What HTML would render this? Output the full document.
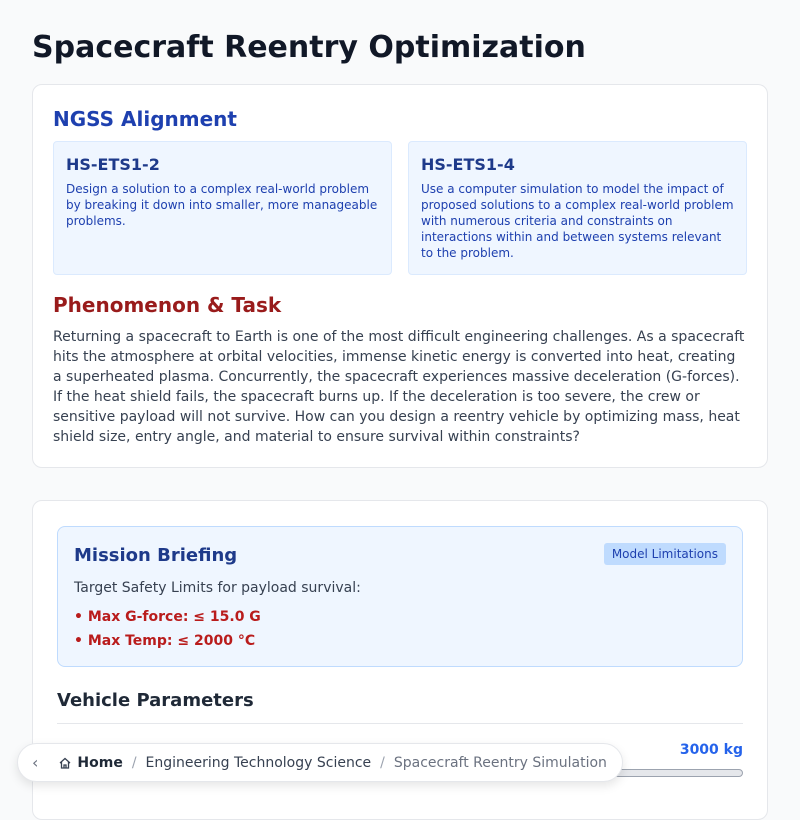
<!DOCTYPE html>
<html><head><style>
*{box-sizing:border-box;margin:0;padding:0}
body{width:800px;height:800px;overflow:hidden;background:#f9fafb;font-family:"DejaVu Sans","Liberation Sans",sans-serif;position:relative}
h1{position:absolute;left:32px;top:30px;font-size:30px;font-weight:bold;color:#111827}
.card{position:absolute;left:32px;width:736px;background:#fff;border:1px solid #e5e7eb;border-radius:10px}
.c1{top:84px;height:384px}
.c2{top:500px;height:320px}
.h2{position:absolute;font-size:20px;font-weight:bold}
.box{position:absolute;top:56px;width:339px;height:134px;background:#eff6ff;border:1px solid #dbeafe;border-radius:4px;padding:13px 12px}
.box b{display:block;font-size:16px;color:#1e3a8a;margin-bottom:7px}
.box p{font-size:12px;line-height:16px;color:#1e40af}
.para{position:absolute;left:20px;top:242px;width:694px;font-size:14px;line-height:20px;color:#374151}
.mb{position:absolute;left:24px;top:25px;width:686px;height:141px;background:#eff6ff;border:1px solid #bfdbfe;border-radius:8px}
</style></head><body>
<h1>Spacecraft Reentry Optimization</h1>
<div class="card c1">
<div class="h2" style="left:20px;top:22px;color:#1e40af">NGSS Alignment</div>
<div class="box" style="left:20px"><b>HS-ETS1-2</b><p>Design a solution to a complex real-world problem by breaking it down into smaller, more manageable problems.</p></div>
<div class="box" style="left:375px"><b>HS-ETS1-4</b><p>Use a computer simulation to model the impact of proposed solutions to a complex real-world problem with numerous criteria and constraints on interactions within and between systems relevant to the problem.</p></div>
<div class="h2" style="left:20px;top:208px;color:#991b1b">Phenomenon &amp; Task</div>
<div class="para">Returning a spacecraft to Earth is one of the most difficult engineering challenges. As a spacecraft hits the atmosphere at orbital velocities, immense kinetic energy is converted into heat, creating a superheated plasma. Concurrently, the spacecraft experiences massive deceleration (G-forces). If the heat shield fails, the spacecraft burns up. If the deceleration is too severe, the crew or sensitive payload will not survive. How can you design a reentry vehicle by optimizing mass, heat shield size, entry angle, and material to ensure survival within constraints?</div>
</div>
<div class="card c2">
<div class="mb">
<div style="position:absolute;left:16px;top:18px;font-size:18px;font-weight:bold;color:#1e3a8a">Mission Briefing</div>
<div style="position:absolute;right:16px;top:16px;background:#bfdbfe;color:#1e40af;font-size:12px;padding:4px 8px;border-radius:3px">Model Limitations</div>
<div style="position:absolute;left:16px;top:53px;font-size:14px;color:#374151">Target Safety Limits for payload survival:</div>
<div style="position:absolute;left:16px;top:78px;font-size:14px;font-weight:bold;color:#b91c1c;line-height:24px">• Max G-force: ≤ 15.0 G<br>• Max Temp: ≤ 2000 °C</div>
</div>
<div style="position:absolute;left:24px;top:189px;font-size:18px;font-weight:bold;color:#1f2937">Vehicle Parameters</div>
<div style="position:absolute;left:24px;top:222px;width:686px;height:1px;background:#e5e7eb"></div>
<div style="position:absolute;right:24px;top:241px;font-size:14px;font-weight:bold;color:#2563eb">3000 kg</div>
<div style="position:absolute;left:24px;top:268px;width:686px;height:8px;background:#e5e7eb;border:1px solid #9ca3af;border-radius:4px"></div>
</div>
<div style="position:absolute;left:17px;top:743px;width:606px;height:39px;background:#fff;border:1px solid #e5e7eb;border-radius:20px;box-shadow:0 4px 10px rgba(0,0,0,.1);font-size:14px;color:#374151;display:flex;align-items:center;padding-left:14px;white-space:nowrap">
<span style="color:#6b7280;margin-right:20px;font-size:16px">‹</span>
<svg width="14" height="14" viewBox="0 0 14 14" style="margin-right:5px"><path d="M2 7L7 2.5 12 7M3.5 6v6h7V6M6 12V9h2v3" fill="none" stroke="#374151" stroke-width="1.3"/></svg>
<b style="color:#1f2937">Home</b><span style="color:#9ca3af;margin:0 9px">/</span>Engineering Technology Science<span style="color:#9ca3af;margin:0 9px">/</span><span style="color:#6b7280">Spacecraft Reentry Simulation</span></div>
</body></html>
